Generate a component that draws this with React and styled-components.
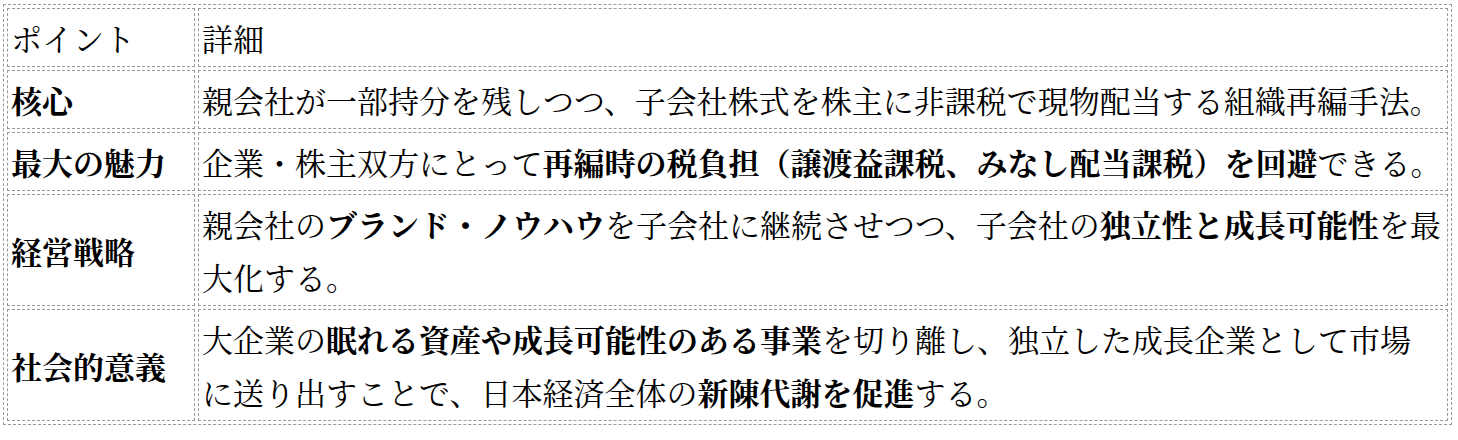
import React from 'react';
import styled, { createGlobalStyle } from 'styled-components';

const GlobalStyle = createGlobalStyle`
  html, body {
    margin: 0;
    padding: 0;
    background: #fff;
  }
  body {
    font-family: "Noto Serif CJK JP", "Noto Sans CJK JP", "Liberation Serif", serif;
    color: #000;
  }
`;

const Table = styled.table`
  margin: 4px 3px;
  width: 1449px;
  table-layout: fixed;
  border: 1px dashed #999;
  border-collapse: separate;
  border-spacing: 3px;
  font-size: 31px;
  line-height: 53px;
`;

const Cell = styled.td`
  border: 1px dashed #999;
  padding: 2px 3px;
  vertical-align: middle;
  font-weight: ${(p) => (p.$label ? 'bold' : 'normal')};
  white-space: ${(p) => (p.$label ? 'nowrap' : 'normal')};
`;

const Strong = styled.b`
  font-weight: bold;
`;

const rows = [
  {
    label: '核心',
    detail: <>親会社が一部持分を残しつつ、子会社株式を株主に非課税で現物配当する組織再編手法。</>,
  },
  {
    label: '最大の魅力',
    detail: (
      <>
        企業・株主双方にとって<Strong>再編時の税負担（譲渡益課税、みなし配当課税）を回避</Strong>できる。
      </>
    ),
  },
  {
    label: '経営戦略',
    detail: (
      <>
        親会社の<Strong>ブランド・ノウハウ</Strong>を子会社に継続させつつ、子会社の
        <Strong>独立性と成長可能性</Strong>を最大化する。
      </>
    ),
  },
  {
    label: '社会的意義',
    detail: (
      <>
        大企業の<Strong>眠れる資産や成長可能性のある事業</Strong>を切り離し、独立した成長企業として市場
        <br />
        に送り出すことで、日本経済全体の<Strong>新陳代謝を促進</Strong>する。
      </>
    ),
  },
];

export default function App() {
  return (
    <>
      <GlobalStyle />
      <Table>
        <colgroup>
          <col style={{ width: '188px' }} />
          <col />
        </colgroup>
        <tbody>
          <tr>
            <Cell>ポイント</Cell>
            <Cell>詳細</Cell>
          </tr>
          {rows.map((r) => (
            <tr key={r.label}>
              <Cell $label>{r.label}</Cell>
              <Cell>{r.detail}</Cell>
            </tr>
          ))}
        </tbody>
      </Table>
    </>
  );
}
